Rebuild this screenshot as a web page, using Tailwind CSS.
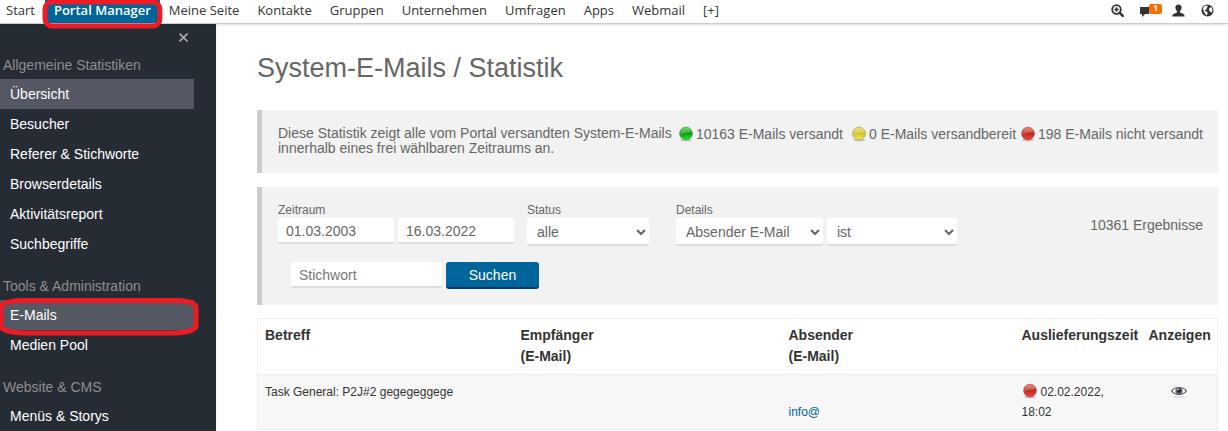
<!DOCTYPE html>
<html lang="de">
<head>
    <meta charset="UTF-8">
    <meta name="viewport" content="width=device-width, initial-scale=1.0">
    <title>System-E-Mails / Statistik</title>
    <script src="https://cdn.jsdelivr.net/npm/@tailwindcss/browser@4"></script>
</head>
<body class="flex min-h-screen flex-col bg-white font-['Liberation_Sans',Arial,sans-serif] text-sm text-[#666]">
    <!-- Shared gradients and the status ball -->
    <svg class="absolute size-0" aria-hidden="true">
        <defs>
            <linearGradient id="green" x1="0" y1="0" x2="0" y2="1"><stop offset="0" stop-color="#3ddc3a"/><stop offset=".5" stop-color="#159a1c"/><stop offset="1" stop-color="#22ee2a"/></linearGradient>
            <linearGradient id="yellow" x1="0" y1="0" x2="0" y2="1"><stop offset="0" stop-color="#e6e05a"/><stop offset=".5" stop-color="#cdc22f"/><stop offset="1" stop-color="#f2ea55"/></linearGradient>
            <linearGradient id="red" x1="0" y1="0" x2="0" y2="1"><stop offset="0" stop-color="#ea6a5c"/><stop offset=".5" stop-color="#b92b20"/><stop offset="1" stop-color="#f5463a"/></linearGradient>
            <symbol id="ball" viewBox="0 0 16 16">
                <ellipse cx="8" cy="14" rx="6" ry="1.5" fill="#999" opacity=".5"/>
                <circle cx="8" cy="7.5" r="6.5" stroke="#000" stroke-opacity=".25" stroke-width=".8"/>
                <path d="M2.2 7.5C2.4 3.8 5 1.8 8 1.8s5.6 2 5.8 4.2C10.5 6 5 7 2.2 9z" fill="#fff" opacity=".2"/>
            </symbol>
        </defs>
    </svg>

    <!-- Top navigation -->
    <header class="relative z-10 flex h-6 shrink-0 items-center justify-between border-b border-[#ccc] bg-white shadow-sm">
        <nav class="flex h-full font-['Open_Sans','Noto_Sans',sans-serif] text-[13px] leading-[21px] text-[#333]">
            <a href="#" class="pr-[10px] pl-[6px]">Start</a>
            <a href="#" class="relative bg-[#00659a] px-[9px] font-semibold text-white">Portal Manager
                <svg class="absolute -top-px -left-[2px] h-[30px] w-[calc(100%+4px)] overflow-visible" aria-hidden="true">
                    <rect x="2" y="3" height="24" rx="7" fill="none" stroke="#ed1c24" stroke-width="5" class="w-[calc(100%-4px)]"/>
                </svg>
            </a>
            <a href="#" class="px-[9px]">Meine Seite</a>
            <a href="#" class="px-[9px]">Kontakte</a>
            <a href="#" class="px-[9px]">Gruppen</a>
            <a href="#" class="px-[9px]">Unternehmen</a>
            <a href="#" class="px-[9px]">Umfragen</a>
            <a href="#" class="px-[9px]">Apps</a>
            <a href="#" class="px-[9px]">Webmail</a>
            <a href="#" class="px-[9px]">[+]</a>
        </nav>
        <div class="flex items-center gap-4 pr-[14px] pb-[3px] text-[#333]">
            <button type="button" aria-label="Suche">
                <svg class="size-[13px]" viewBox="0 0 13 13" fill="none" stroke="currentColor"><circle cx="5.5" cy="5.5" r="4.3" stroke-width="1.8"/><path d="M8.8 8.8l3 3" stroke-width="2.4" stroke-linecap="round"/><path d="M3.3 5.5h4.4M5.5 3.3v4.4" stroke-width="1.6"/></svg>
            </button>
            <button type="button" aria-label="Nachrichten" class="flex">
                <svg class="mt-[2px] h-[11px] w-[9px]" viewBox="0 0 9 11" fill="currentColor"><path d="M0 1h9v7H5L2 11V8H0z"/></svg>
                <span class="flex h-[10px] w-[13px] items-center justify-center rounded-xs bg-[#ff6c00] font-['Open_Sans',sans-serif] text-[9px] font-bold text-white">1</span>
            </button>
            <button type="button" aria-label="Profil" class="-ml-[6px]">
                <svg class="size-[13px]" viewBox="0 0 13 13" fill="currentColor"><path d="M6.500.5C8.600.5 9.700 1.900 9.600 3.700 9.500 5.300 8.700 6.300 8 7v1.300c.8 1 4.700 1 4.700 4.200H.3c0-3.200 3.900-3.200 4.700-4.200V7C4.300 6.300 3.500 5.300 3.400 3.700 3.300 1.900 4.400.5 6.500.5z"/></svg>
            </button>
            <button type="button" aria-label="Sprache">
                <svg class="size-[13px]" viewBox="0 0 13 13"><circle cx="6.5" cy="6.5" r="6" fill="currentColor"/><path d="M2 4.200C3 2.200 4.500 1.600 6 1.600l.8 1.300-1.400 1 .4 1.300-1.900.8.300 1.300 1.800.5.700 1.500-1 2.300C3.800 10.500 4 8.800 2.800 7.600z" fill="#fff"/><path d="M8.300 4.300l2-1.200c1 1.300 1.300 2.700.9 4.300l-1.300 1.500-.8-2-1.300-.7z" fill="#fff"/></svg>
            </button>
        </div>
    </header>

    <div class="flex flex-1">
        <!-- Sidebar -->
        <aside class="w-[216px] shrink-0 bg-[#262c34] shadow-sm">
            <div class="flex h-[27px] justify-end pr-7">
                <button type="button" aria-label="Schließen" class="text-[#aaa]">
                    <svg class="size-[9px]" viewBox="0 0 9 9" stroke="currentColor" stroke-width="1.600"><path d="M.5.5l8 8M8.500.5l-8 8"/></svg>
                </button>
            </div>
            <h2 class="pl-[3px] leading-7 text-[#8e8e8e]">Allgemeine Statistiken</h2>
            <ul class="w-[194px] leading-[30px] text-white">
                <li><a href="#" class="block bg-[#535863] pl-[10px]">Übersicht</a></li>
                <li><a href="#" class="block pl-[10px]">Besucher</a></li>
                <li><a href="#" class="block pl-[10px]">Referer &amp; Stichworte</a></li>
                <li><a href="#" class="block pl-[10px]">Browserdetails</a></li>
                <li><a href="#" class="block pl-[10px]">Aktivitätsreport</a></li>
                <li><a href="#" class="block pl-[10px]">Suchbegriffe</a></li>
            </ul>
            <h2 class="mt-[13px] pl-[3px] leading-7 text-[#8e8e8e]">Tools &amp; Administration</h2>
            <ul class="w-[194px] leading-[30px] text-white">
                <li class="relative">
                    <a href="#" class="block bg-[#535863] pl-[10px]">E-Mails</a>
                    <svg class="absolute -top-[2px] left-0 h-[38px] w-[199px]" viewBox="0 0 199 38" fill="none" stroke="#ed1c24" stroke-width="5" aria-hidden="true"><path d="M22 2.5h155c12 .5 19 3 19 7v18c0 4-8 7-23 7.500H25c-14-.5-24-3-24-7V9c0-4 8-6 21-6.500z"/></svg>
                </li>
                <li><a href="#" class="block pl-[10px]">Medien Pool</a></li>
            </ul>
            <h2 class="mt-[13px] pl-[3px] leading-7 text-[#8e8e8e]">Website &amp; CMS</h2>
            <ul class="w-[194px] leading-[30px] text-white">
                <li><a href="#" class="block pl-[10px]">Menüs &amp; Storys</a></li>
            </ul>
        </aside>

        <!-- Content -->
        <main class="min-w-0 flex-1 pr-[10px] pl-[41px]">
            <h1 class="mt-6 mb-[22px] text-[27px] leading-10">System-E-Mails / Statistik</h1>

            <section class="mb-[14px] flex h-[63px] justify-between border-l-[5px] border-[#ccc] bg-[#f2f2f2] pt-4 pr-[15px] pl-4 leading-[15px] whitespace-nowrap">
                <p>Diese Statistik zeigt alle vom Portal versandten System-E-Mails<br>innerhalb eines frei wählbaren Zeitraums an.</p>
                <ul class="flex gap-1">
                    <li class="mr-1 flex h-4 items-center gap-[2px]"><svg class="size-4" fill="url(#green)"><use href="#ball"/></svg>10163 E-Mails versandt</li>
                    <li class="flex h-4 items-center gap-[2px]"><svg class="size-4" fill="url(#yellow)"><use href="#ball"/></svg>0 E-Mails versandbereit</li>
                    <li class="flex h-4 items-center gap-[2px]"><svg class="size-4" fill="url(#red)"><use href="#ball"/></svg>198 E-Mails nicht versandt</li>
                </ul>
            </section>

            <!-- Filter -->
            <form class="mb-[13px] flex h-[118px] justify-between border-l-[5px] border-[#ccc] bg-[#f2f2f2] pt-4 pr-[15px] pl-4">
                <div>
                    <div class="flex items-start gap-[13px]">
                        <div>
                            <label for="von" class="block text-xs leading-[15px]">Zeitraum</label>
                            <div class="flex gap-1">
                                <input id="von" type="text" value="01.03.2003" class="h-[26px] w-[116px] rounded-xs border-b-2 border-[#ddd] bg-white px-2 pt-[2px]">
                                <input type="text" aria-label="bis" value="16.03.2022" class="h-[26px] w-[116px] rounded-xs border-b-2 border-[#ddd] bg-white px-2 pt-[2px]">
                            </div>
                        </div>
                        <div>
                            <label for="status" class="block text-xs leading-[15px]">Status</label>
                            <select id="status" class="h-7 w-[122px] rounded-xs border-b-2 border-[#ddd] bg-white px-[6px] pt-[2px]"><option>alle</option></select>
                        </div>
                        <div class="ml-[14px]">
                            <label for="details" class="block text-xs leading-[15px]">Details</label>
                            <div class="flex gap-1">
                                <select id="details" class="h-7 w-[147px] rounded-xs border-b-2 border-[#ddd] bg-white px-[6px] pt-[2px]"><option>Absender E-Mail</option></select>
                                <select aria-label="Vergleich" class="h-7 w-[130px] rounded-xs border-b-2 border-[#ddd] bg-white px-[6px] pt-[2px]"><option>ist</option></select>
                            </div>
                        </div>
                    </div>
                    <div class="mt-4 ml-[13px] flex gap-1">
                        <input type="text" aria-label="Stichwort" placeholder="Stichwort" class="h-[26px] w-[151px] rounded-xs border-b-2 border-[#ddd] bg-white px-2 pt-[2px] placeholder:text-[#777]">
                        <button type="submit" class="h-[27px] w-[93px] rounded-[3px] border-b-2 border-[#003a6b] bg-[#00659a] text-sm text-white">Suchen</button>
                    </div>
                </div>
                <p class="pt-3 leading-5 whitespace-nowrap">10361 Ergebnisse</p>
            </form>

            <table class="w-full table-fixed border-collapse border border-[#eee] text-left text-[#333]">
                <colgroup>
                    <col class="w-[256px]"><col><col class="w-[233px]"><col class="w-[127px]"><col class="w-[76px]">
                </colgroup>
                <thead>
                    <tr class="h-14 border-b border-[#eee] align-top leading-[21px]">
                        <th class="px-[7px] pt-[6px]">Betreff</th>
                        <th class="px-[7px] pt-[6px]">Empfänger<br>(E-Mail)</th>
                        <th class="px-[7px] pt-[6px]">Absender<br>(E-Mail)</th>
                        <th class="px-[7px] pt-[6px]">Auslieferungszeit</th>
                        <th class="px-[7px] pt-[6px]">Anzeigen</th>
                    </tr>
                </thead>
                <tbody class="text-xs leading-5">
                    <tr class="h-[55px] bg-[#f7f7f7] align-top">
                        <td class="px-[7px] pt-[7px]">Task General: P2J#2 gegegeggege</td>
                        <td></td>
                        <td class="px-[7px] pt-[27px]"><a href="#" class="text-[#00659a]">info@</a></td>
                        <td class="px-[7px] pt-[7px]"><svg class="mr-[3px] inline size-4 align-text-bottom" fill="url(#red)"><use href="#ball"/></svg>02.02.2022,<br>18:02</td>
                        <td class="pt-[10px]">
                            <button type="button" aria-label="Anzeigen" class="mx-auto block">
                                <svg class="h-[13px] w-4" viewBox="0 0 16 13"><path d="M.6 6C4 1.300 12 1.300 15.400 6 12 10.500 4 10.500.6 6z" fill="#fff" stroke="#555" stroke-width="1.200"/><circle cx="8" cy="5.800" r="3.600" fill="#667"/><circle cx="8" cy="5.800" r="2" fill="#222"/><circle cx="7.200" cy="4.600" r=".8" fill="#fff"/><path d="M3 11.500q5 1.500 10 0" stroke="#ccc" fill="none"/></svg>
                            </button>
                        </td>
                    </tr>
                </tbody>
            </table>
        </main>
    </div>
</body>
</html>
